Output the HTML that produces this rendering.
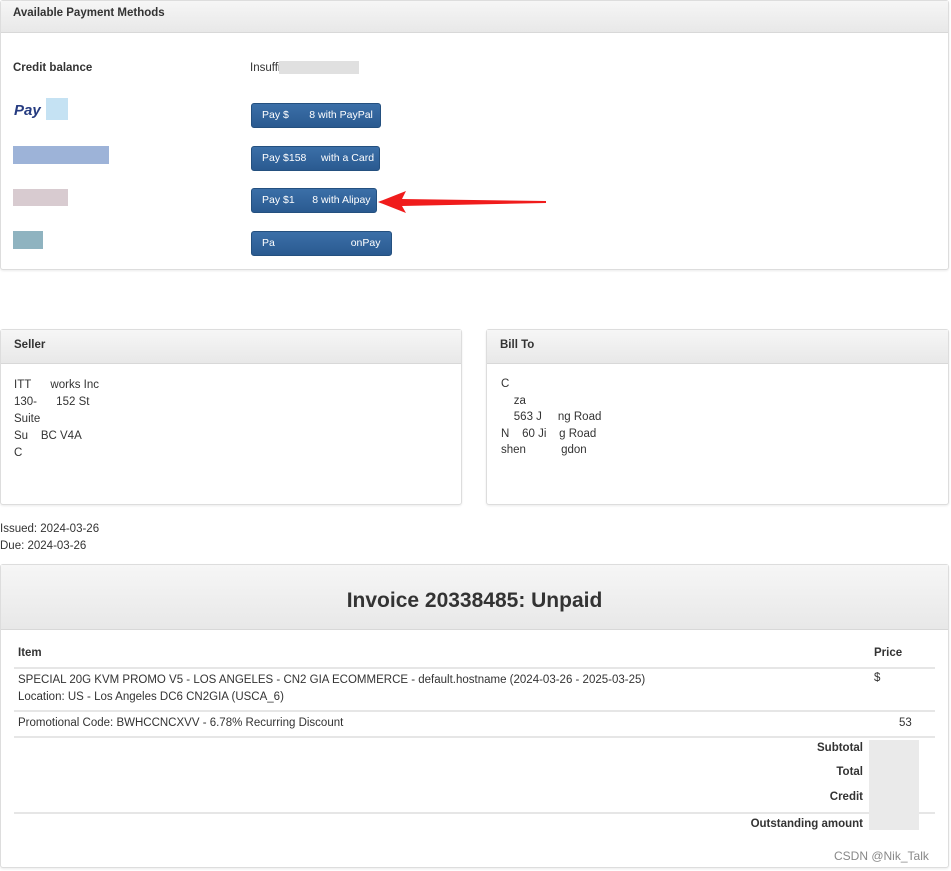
<!DOCTYPE html>
<html><head><meta charset="utf-8"><style>
*{box-sizing:border-box;margin:0;padding:0}
body{width:951px;height:871px;background:#fff;font-family:"Liberation Sans",Arial,sans-serif;font-size:11.5px;color:#333;position:relative;overflow:hidden}
.a{position:absolute}
.panel{position:absolute;border:1px solid #ddd;border-radius:3px;background:#fff;box-shadow:0 1px 2px rgba(0,0,0,.08)}
.hd{position:absolute;left:0;right:0;top:0;background:linear-gradient(#f6f6f6,#e8e8e8);border-bottom:1px solid #d8d8d8;font-weight:bold;font-size:11.5px;color:#333}
.btn{position:absolute;left:250px;height:25px;background:linear-gradient(#3b6fa8,#2a5a90);border:1px solid #24507f;border-radius:3px;color:#fff;font-size:10.5px;line-height:23px;padding-left:10px;white-space:nowrap;overflow:hidden}
.blur{position:absolute;background:#ccc}
.row{position:absolute;left:13px;right:13px;border-top:2px solid #e6e6e6}
.r{position:absolute;right:85px;text-align:right;font-weight:bold}
</style></head><body>

<div class="panel" style="left:0;top:0;width:949px;height:270px">
 <div class="hd" style="height:32px;padding:6px 12px">Available Payment Methods</div>
 <div class="a" style="left:12px;top:61px;font-weight:bold">Credit balance</div>
 <div class="a" style="left:249px;top:61px">Insufficie</div>
 <div class="blur" style="left:278px;top:60px;width:80px;height:13px;background:#e0e0e0"></div>
 <div class="a" style="left:13px;top:101px;font-weight:bold;font-style:italic;font-size:15px;color:#253b80">Pay</div>
 <div class="blur" style="left:45px;top:97px;width:22px;height:22px;background:#c5e2f3"></div>
 <div class="blur" style="left:12px;top:145px;width:96px;height:18px;background:#9db3d8"></div>
 <div class="blur" style="left:12px;top:188px;width:55px;height:17px;background:#d8cbd0"></div>
 <div class="blur" style="left:12px;top:230px;width:30px;height:18px;background:#8fb3c0"></div>
 <div class="btn" style="top:102px;width:130px">Pay $&nbsp;&nbsp;&nbsp;&nbsp;&nbsp;&nbsp;&nbsp;8 with PayPal</div>
 <div class="btn" style="top:145px;width:129px">Pay $158&nbsp;&nbsp;&nbsp;&nbsp; with a Card</div>
 <div class="btn" style="top:187px;width:126px">Pay $1&nbsp;&nbsp;&nbsp;&nbsp;&nbsp;&nbsp;8 with Alipay</div>
 <div class="btn" style="top:230px;width:141px">Pa&nbsp;&nbsp;&nbsp;&nbsp;&nbsp;&nbsp;&nbsp;&nbsp;&nbsp;&nbsp;&nbsp;&nbsp;&nbsp;&nbsp;&nbsp;&nbsp;&nbsp;&nbsp;&nbsp;&nbsp;&nbsp;&nbsp;&nbsp;&nbsp;&nbsp;&nbsp;onPay</div>
 <svg class="a" style="left:375px;top:189px" width="172" height="25"><polygon points="2,12 30,1 26,9 170,11 170,13 26,16 30,23" fill="#f01c1c"/></svg>
</div>

<div class="panel" style="left:0;top:329px;width:462px;height:176px">
 <div class="hd" style="height:34px;padding:9px 13px">Seller</div>
 <div class="a" style="left:13px;top:47px;line-height:17px">ITT&nbsp;&nbsp;&nbsp;&nbsp;&nbsp;&nbsp;works Inc<br>130-&nbsp;&nbsp;&nbsp;&nbsp;&nbsp;&nbsp;152 St<br>Suite<br>Su&nbsp;&nbsp;&nbsp;&nbsp;BC V4A<br>C</div>
</div>
<div class="panel" style="left:486px;top:329px;width:463px;height:176px">
 <div class="hd" style="height:34px;padding:9px 13px">Bill To</div>
 <div class="a" style="left:14px;top:46px;line-height:16.5px">C<br>&nbsp;&nbsp;&nbsp;&nbsp;za<br>&nbsp;&nbsp;&nbsp;&nbsp;563 J&nbsp;&nbsp;&nbsp;&nbsp;&nbsp;ng Road<br>N&nbsp;&nbsp;&nbsp;&nbsp;60 Ji&nbsp;&nbsp;&nbsp;&nbsp;g Road<br>shen&nbsp;&nbsp;&nbsp;&nbsp;&nbsp;&nbsp;&nbsp;&nbsp;&nbsp;&nbsp;&nbsp;gdon</div>
</div>

<div class="a" style="left:0;top:521px;line-height:17px">Issued: 2024-03-26<br>Due: 2024-03-26</div>

<div class="panel" style="left:0;top:564px;width:949px;height:304px">
 <div class="hd" style="height:65px;text-align:center;font-size:21px;line-height:72px">Invoice 20338485: Unpaid</div>
 <div class="a" style="left:17px;top:82px;font-weight:bold">Item</div>
 <div class="a" style="left:873px;top:82px;font-weight:bold">Price</div>
 <div class="row" style="top:102px"></div>
 <div class="a" style="left:17px;top:107px;line-height:17px">SPECIAL 20G KVM PROMO V5 - LOS ANGELES - CN2 GIA ECOMMERCE - default.hostname (2024-03-26 - 2025-03-25)<br>Location: US - Los Angeles DC6 CN2GIA (USCA_6)</div>
 <div class="a" style="left:873px;top:107px">$</div>
 <div class="row" style="top:145px"></div>
 <div class="a" style="left:17px;top:152px">Promotional Code: BWHCCNCXVV - 6.78% Recurring Discount</div>
 <div class="a" style="left:898px;top:152px">53</div>
 <div class="row" style="top:171px"></div>
 <div class="r" style="top:177px">Subtotal</div>
 <div class="r" style="top:201px">Total</div>
 <div class="r" style="top:226px">Credit</div>
 <div class="row" style="top:247px"></div>
 <div class="r" style="top:253px">Outstanding amount</div>
 <div class="blur" style="left:868px;top:175px;width:50px;height:90px;background:#eaeaea"></div>
 <div class="a" style="left:833px;top:284px;color:#888;font-size:12px">CSDN @Nik_Talk</div>
</div>
</body></html>
